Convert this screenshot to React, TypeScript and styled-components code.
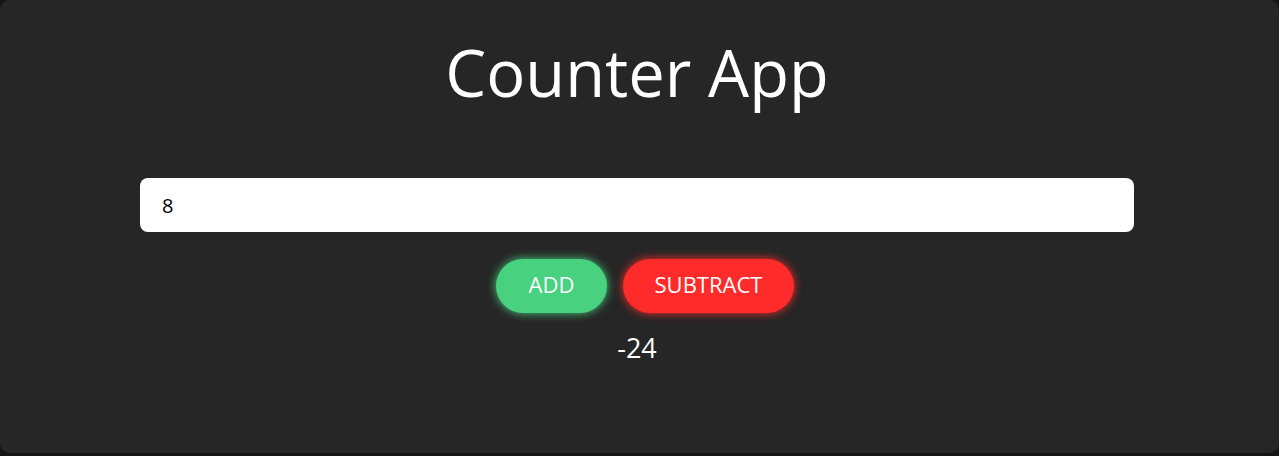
import React, { useState } from "react";
import styled, { createGlobalStyle } from "styled-components";

const Global = createGlobalStyle`
  html, body { margin: 0; padding: 0; background: #151515; }
  body { font-family: "Open Sans", "Noto Sans", sans-serif; }
`;

const Card = styled.div`
  box-sizing: border-box;
  width: 1279px;
  height: 453px;
  background: #262626;
  border-radius: 10px;
  display: flex;
  flex-direction: column;
  align-items: center;
  padding: 28px 5px 0 0;
`;

const Title = styled.h1`
  margin: 0;
  color: #ffffff;
  font-size: 65px;
  font-weight: 400;
  line-height: 89px;
`;

const Input = styled.input`
  box-sizing: border-box;
  margin-top: 61px;
  width: 994px;
  height: 54px;
  border: none;
  border-radius: 8px;
  background: #ffffff;
  padding: 0 22px;
  font-family: "Open Sans", sans-serif;
  font-size: 20px;
  color: #000;
  outline: none;
`;

const Buttons = styled.div`
  display: flex;
  margin-top: 27px;
`;

const Pill = styled.button<{ $color: string; $width: number }>`
  width: ${(p) => p.$width}px;
  height: 54px;
  margin-left: 16px;
  padding: 0 0 4px;
  border: none;
  border-radius: 27px;
  background: ${(p) => p.$color};
  box-shadow: 0 0 10px ${(p) => p.$color};
  color: #ffffff;
  font-family: "Open Sans", sans-serif;
  font-size: 22px;
  line-height: 30px;
  cursor: pointer;
`;

const Count = styled.div`
  margin-top: 16px;
  color: #ffffff;
  font-size: 27px;
  line-height: 38px;
`;

export default function App() {
  const [value, setValue] = useState("8");
  const [count, setCount] = useState(-24);
  const n = Number(value) || 0;
  return (
    <>
      <Global />
      <Card>
        <Title>Counter App</Title>
        <Input value={value} onChange={(e) => setValue(e.target.value)} />
        <Buttons>
          <Pill $color="#48d17f" $width={111} onClick={() => setCount(count + n)}>
            ADD
          </Pill>
          <Pill $color="#ff2a2a" $width={171} onClick={() => setCount(count - n)}>
            SUBTRACT
          </Pill>
        </Buttons>
        <Count>{count}</Count>
      </Card>
    </>
  );
}
